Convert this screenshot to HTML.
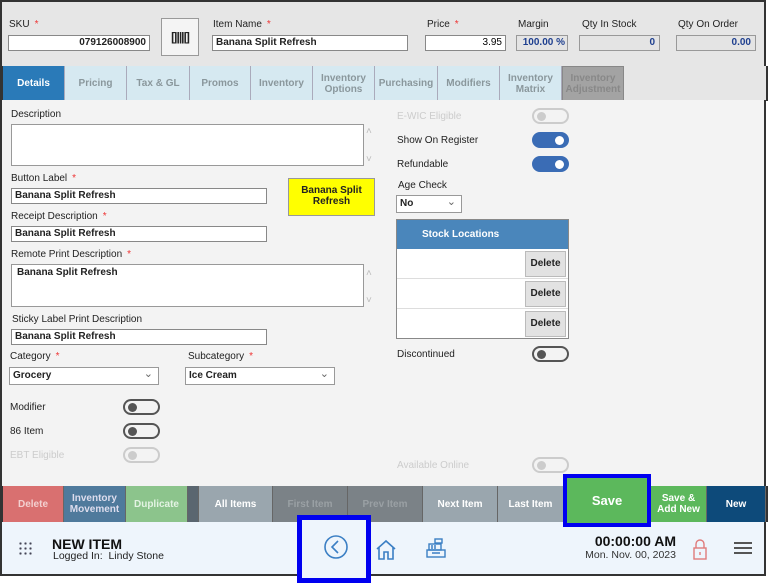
<!DOCTYPE html>
<html><head><style>
*{box-sizing:border-box;margin:0;padding:0}
body{width:768px;height:583px;background:#fff;font-family:"Liberation Sans",Arial,sans-serif;position:relative;overflow:hidden;font-size:10px;color:#222}
.a{position:absolute}
.hdr{left:0;top:0;width:766px;height:66px;background:#e6e6e6;border-top:2px solid #333;border-left:2px solid #333;border-right:2px solid #333}
.lbl{position:absolute;font-size:10px;color:#222;white-space:nowrap}
.req{color:#e33;margin-left:5px}
.inp{position:absolute;background:#fff;border:1px solid #888;height:16px;font-size:10px;font-weight:bold;padding:1px 3px;white-space:nowrap;overflow:hidden}
.ro{position:absolute;background:#e4e4e4;border:1px solid #999;height:16px;font-size:10px;font-weight:bold;color:#1e3f8f;text-align:right;padding:1px 4px;white-space:nowrap}
.tab{position:absolute;top:66px;height:35px;background:#d6e9f1;border-right:1px solid #aab;color:#8a979c;font-weight:bold;font-size:10px;display:flex;align-items:center;justify-content:center;text-align:center;line-height:11px}
.body{left:0;top:100px;width:766px;height:386px;background:#f3f3f3;border-left:2px solid #333;border-right:2px solid #333}
.ta{position:absolute;background:#fff;border:1px solid #999}
.tog{position:absolute;width:37px;height:16px;border-radius:8px;border:2px solid #555;background:#f3f3f3}
.tog::after{content:"";position:absolute;left:3px;top:2px;width:9px;height:9px;border-radius:50%;background:#555}
.tog.on{background:#3a6cb5;border-color:#3a6cb5}
.tog.on::after{left:auto;right:3px;background:#fff}
.tog.dis{border-color:#ccc}
.tog.dis::after{background:#ccc}
.sel{position:absolute;background:#fff;border:1px solid #999;height:18px;font-size:10px;font-weight:bold;padding:2px 3px}
.sel::after{content:"⌄";position:absolute;right:5px;top:-1px;font-weight:normal;color:#666;font-size:11px}
.btn{position:absolute;top:486px;height:36px;color:#fff;font-weight:bold;font-size:10px;display:flex;align-items:center;justify-content:center;text-align:center;line-height:11px;border-right:1px solid #666}
.foot{left:0;top:522px;width:766px;height:54px;background:#eef5fc;border-left:2px solid #333;border-right:2px solid #333;border-bottom:2px solid #333}
</style></head><body>
<div class="a hdr">
<div class="lbl" style="left:7px;top:17px">SKU<span class="req">*</span></div>
<div class="inp" style="left:6px;top:33px;width:142px;text-align:right">079126008900</div>
<div class="a" style="left:159px;top:16px;width:38px;height:38px;background:#f4f4f4;border:1px solid #999;display:flex;align-items:center;justify-content:center;font-weight:bold;font-size:12px;letter-spacing:-1px">[|||||]</div>
<div class="lbl" style="left:211px;top:17px">Item Name<span class="req">*</span></div>
<div class="inp" style="left:210px;top:33px;width:196px">Banana Split Refresh</div>
<div class="lbl" style="left:425px;top:17px">Price<span class="req">*</span></div>
<div class="inp" style="left:423px;top:33px;width:81px;text-align:right;font-weight:normal;color:#000">3.95</div>
<div class="lbl" style="left:516px;top:17px">Margin</div>
<div class="ro" style="left:514px;top:33px;width:52px;padding:1px 2px">100.00 %</div>
<div class="lbl" style="left:580px;top:17px">Qty In Stock</div>
<div class="ro" style="left:577px;top:33px;width:81px">0</div>
<div class="lbl" style="left:676px;top:17px">Qty On Order</div>
<div class="ro" style="left:674px;top:33px;width:80px">0.00</div>
</div>
<div class="tab" style="left:3px;width:62px;background:#2a7ab8;color:#fff">Details</div>
<div class="tab" style="left:65px;width:62px">Pricing</div>
<div class="tab" style="left:127px;width:63px">Tax &amp; GL</div>
<div class="tab" style="left:190px;width:61px">Promos</div>
<div class="tab" style="left:251px;width:62px">Inventory</div>
<div class="tab" style="left:313px;width:62px">Inventory<br>Options</div>
<div class="tab" style="left:375px;width:63px">Purchasing</div>
<div class="tab" style="left:438px;width:62px">Modifiers</div>
<div class="tab" style="left:500px;width:62px">Inventory<br>Matrix</div>
<div class="tab" style="left:562px;width:62px;background:#a3a3a3;color:#888;border:1px solid #888">Inventory<br>Adjustment</div>
<div class="a" style="left:0;top:66px;width:3px;height:35px;background:#333"></div>
<div class="a" style="left:624px;top:66px;width:144px;height:35px;background:#e6e6e6;border-right:2px solid #333"></div>
<div class="a body">
<div class="lbl" style="left:9px;top:9px">Description</div>
<div class="ta" style="left:9px;top:24px;width:353px;height:42px"></div>
<div class="lbl" style="left:364px;top:26px;color:#bbb">˄</div><div class="lbl" style="left:364px;top:54px;color:#bbb">˅</div>
<div class="lbl" style="left:9px;top:73px">Button Label<span class="req">*</span></div>
<div class="inp" style="left:9px;top:88px;width:256px">Banana Split Refresh</div>
<div class="a" style="left:286px;top:78px;width:87px;height:38px;background:#ffff00;border:1px solid #999;font-weight:bold;font-size:10px;text-align:center;line-height:11px;padding-top:6px">Banana Split<br>Refresh</div>
<div class="lbl" style="left:9px;top:111px">Receipt Description<span class="req">*</span></div>
<div class="inp" style="left:9px;top:126px;width:256px">Banana Split Refresh</div>
<div class="lbl" style="left:9px;top:149px">Remote Print Description<span class="req">*</span></div>
<div class="ta" style="left:9px;top:164px;width:353px;height:43px;font-weight:bold;padding:2px 5px">Banana Split Refresh</div>
<div class="lbl" style="left:364px;top:168px;color:#bbb">˄</div><div class="lbl" style="left:364px;top:195px;color:#bbb">˅</div>
<div class="lbl" style="left:10px;top:214px">Sticky Label Print Description</div>
<div class="inp" style="left:9px;top:229px;width:256px">Banana Split Refresh</div>
<div class="lbl" style="left:8px;top:251px">Category<span class="req">*</span></div>
<div class="sel" style="left:7px;top:267px;width:150px">Grocery</div>
<div class="lbl" style="left:186px;top:251px">Subcategory<span class="req">*</span></div>
<div class="sel" style="left:183px;top:267px;width:150px">Ice Cream</div>
<div class="lbl" style="left:8px;top:302px">Modifier</div><div class="tog" style="left:121px;top:299px"></div>
<div class="lbl" style="left:8px;top:326px">86 Item</div><div class="tog" style="left:121px;top:323px"></div>
<div class="lbl" style="left:8px;top:350px;color:#ccc">EBT Eligible</div><div class="tog dis" style="left:121px;top:347px"></div>
<div class="lbl" style="left:395px;top:11px;color:#ccc">E-WIC Eligible</div><div class="tog dis" style="left:530px;top:8px"></div>
<div class="lbl" style="left:395px;top:35px">Show On Register</div><div class="tog on" style="left:530px;top:32px"></div>
<div class="lbl" style="left:395px;top:59px">Refundable</div><div class="tog on" style="left:530px;top:56px"></div>
<div class="lbl" style="left:396px;top:80px">Age Check</div>
<div class="sel" style="left:394px;top:95px;width:66px">No</div>
<div class="a" style="left:394px;top:119px;width:173px;height:120px;border:1px solid #888;background:#fff">
<div style="height:29px;background:#4a86bb;color:#fff;font-weight:bold;padding:9px 0 0 25px">Stock Locations</div>
<div style="height:30px;border-bottom:1px solid #ddd;position:relative"><div style="position:absolute;right:2px;top:2px;width:41px;height:26px;background:#e2e2e2;border:1px solid #bbb;font-weight:bold;text-align:center;line-height:24px">Delete</div></div>
<div style="height:30px;border-bottom:1px solid #ddd;position:relative"><div style="position:absolute;right:2px;top:2px;width:41px;height:26px;background:#e2e2e2;border:1px solid #bbb;font-weight:bold;text-align:center;line-height:24px">Delete</div></div>
<div style="height:30px;position:relative"><div style="position:absolute;right:2px;top:2px;width:41px;height:26px;background:#e2e2e2;border:1px solid #bbb;font-weight:bold;text-align:center;line-height:24px">Delete</div></div>
</div>
<div class="lbl" style="left:395px;top:249px">Discontinued</div><div class="tog" style="left:530px;top:246px"></div>
<div class="lbl" style="left:395px;top:360px;color:#ccc">Available Online</div><div class="tog dis" style="left:530px;top:357px"></div>
</div>
<div class="a" style="left:0;top:486px;width:3px;height:36px;background:#333"></div>
<div class="btn" style="left:3px;width:61px;background:#d97070;color:#f3d0d0">Delete</div>
<div class="btn" style="left:64px;width:62px;background:#4f7a9c;color:#dde">Inventory<br>Movement</div>
<div class="btn" style="left:126px;width:62px;background:#8cc48c;color:#e3f3e3">Duplicate</div>
<div class="btn" style="left:188px;width:11px;background:#5a6670"></div>
<div class="btn" style="left:199px;width:74px;background:#9aa6ae">All Items</div>
<div class="btn" style="left:273px;width:75px;background:#7b8287;color:#9aa0a4">First Item</div>
<div class="btn" style="left:348px;width:75px;background:#7b8287;color:#9aa0a4">Prev Item</div>
<div class="btn" style="left:423px;width:75px;background:#9aa6ae">Next Item</div>
<div class="btn" style="left:498px;width:66px;background:#9aa6ae">Last Item</div>
<div class="btn" style="left:651px;width:56px;background:#5cb85c">Save &amp;<br>Add New</div>
<div class="btn" style="left:707px;width:59px;background:#0d4a7a">New</div>
<div class="a" style="left:766px;top:486px;width:2px;height:36px;background:#333"></div>
<div class="a foot">
<div class="a" style="left:16px;top:19px;width:14px;height:14px;background:radial-gradient(circle,#445 1px,transparent 1.3px) 0 0/5px 5px"></div>
<div class="a" style="left:50px;top:14px;font-weight:bold;font-size:14px;color:#111">NEW ITEM</div>
<div class="a" style="left:51px;top:28px;font-size:10.5px;color:#222">Logged In:&nbsp; Lindy Stone</div>
<svg class="a" style="left:372px;top:16px" width="24" height="24" viewBox="0 0 24 24" fill="none" stroke="#3b7fc4" stroke-width="1.6"><path d="M3 11 L12 3 L21 11 M5 9 V21 H10 V14 H14 V21 H19 V9"/></svg>
<svg class="a" style="left:422px;top:15px" width="24" height="24" viewBox="0 0 24 24" fill="none" stroke="#3b7fc4" stroke-width="1.4"><rect x="3" y="13" width="18" height="7"/><rect x="5" y="7" width="12" height="6"/><rect x="11" y="2" width="7" height="4"/><path d="M7 9h2M10 9h2M7 11h2M10 11h2M8 16h8"/></svg>
<div class="a" style="left:578px;top:11px;width:96px;text-align:right;font-weight:bold;font-size:14px;color:#111">00:00:00 AM</div>
<div class="a" style="left:568px;top:27px;width:106px;text-align:right;font-size:10.5px;color:#333">Mon. Nov. 00, 2023</div>
<svg class="a" style="left:690px;top:15px" width="16" height="24" viewBox="0 0 16 24" fill="none" stroke="#e07b7b" stroke-width="1.4"><path d="M4 11 V7 A4 4 0 0 1 12 7 V11"/><rect x="2" y="11" width="12" height="11"/><path d="M8 15v3"/></svg>
<div class="a" style="left:732px;top:20px;width:18px;height:2px;background:#555;box-shadow:0 5px 0 #555,0 10px 0 #555"></div>
</div>
<div class="a" style="left:297px;top:515px;width:74px;height:68px;border:5px solid #0000f0;background:#eef5fc">
<svg class="a" style="left:21px;top:14px" width="26" height="26" viewBox="0 0 26 26" fill="none" stroke="#3b7fc4" stroke-width="1.6"><circle cx="13" cy="13" r="11"/><path d="M15 7 L9 13 L15 19"/></svg>
</div>
<div class="a" style="left:563px;top:474px;width:88px;height:53px;border:4px solid #0000f0;background:#5cb85c;color:#fff;font-weight:bold;font-size:13px;display:flex;align-items:center;justify-content:center">Save</div>
</body></html>
